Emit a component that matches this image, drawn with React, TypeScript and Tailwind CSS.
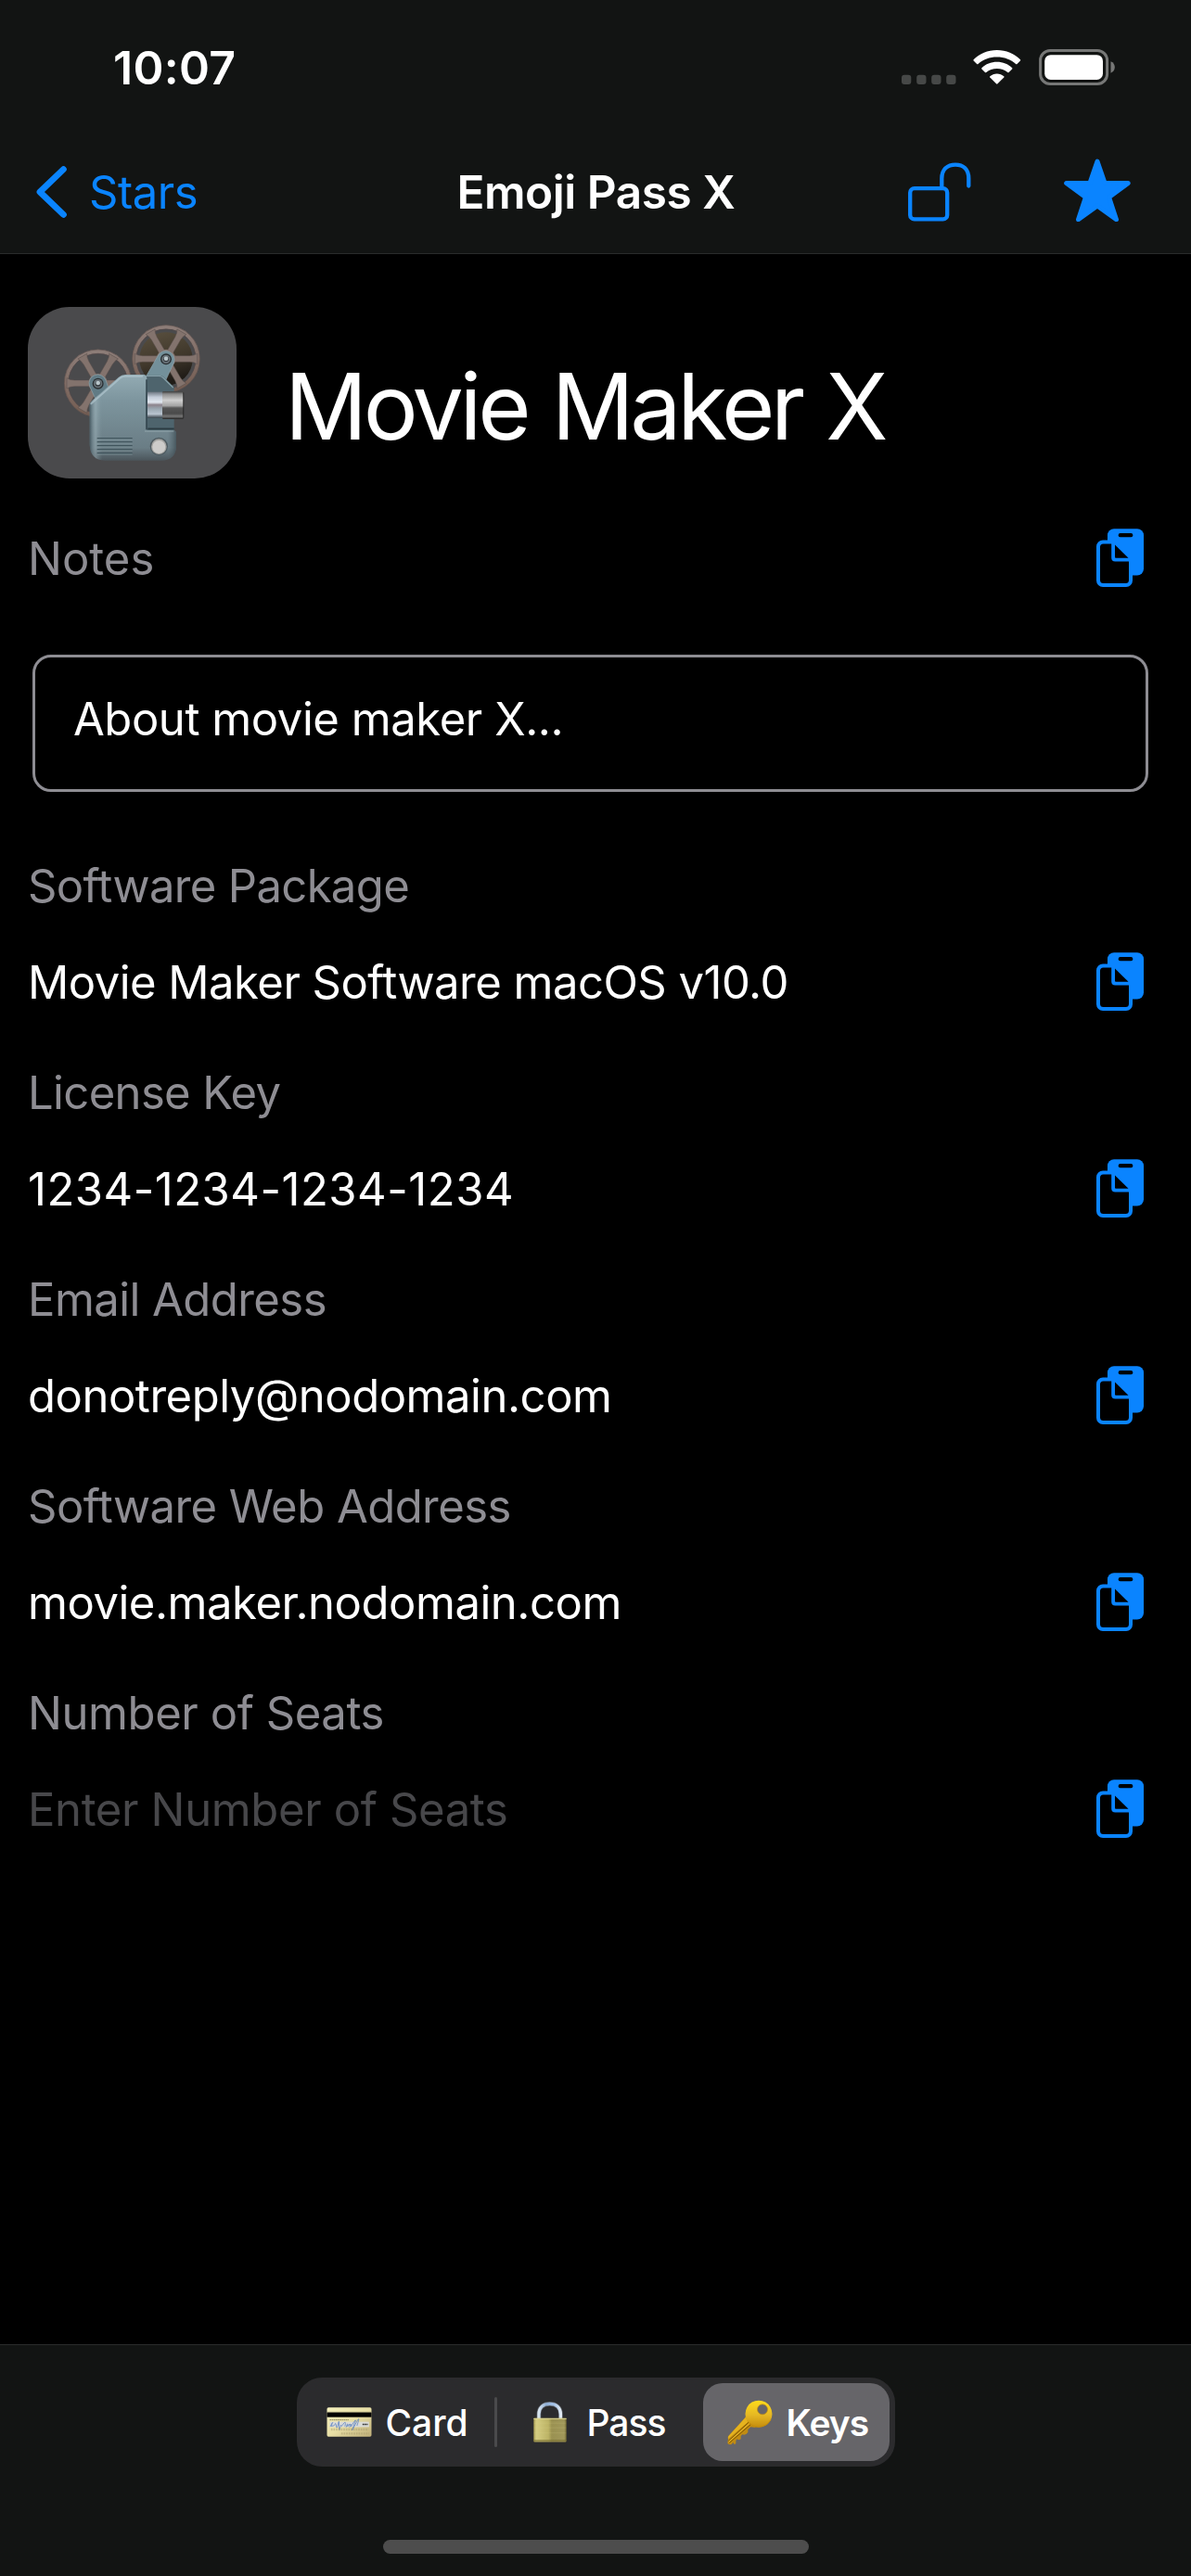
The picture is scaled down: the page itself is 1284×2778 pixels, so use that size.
import React from "react";

const fields = [
  { label: "Software Package", labelCls: "tracking-[-0.65px]", value: "Movie Maker Software macOS v10.0", valueCls: "text-white tracking-[-0.52px]" },
  { label: "License Key", labelCls: "tracking-[-0.64px]", value: "1234-1234-1234-1234", valueCls: "text-white tracking-[0.5px]" },
  { label: "Email Address", labelCls: "tracking-[-0.55px]", value: "donotreply@nodomain.com", valueCls: "text-white tracking-[-0.47px]" },
  { label: "Software Web Address", labelCls: "tracking-[-0.53px]", value: "movie.maker.nodomain.com", valueCls: "text-white tracking-[-0.47px]" },
  { label: "Number of Seats", labelCls: "tracking-[-0.42px]", value: "Enter Number of Seats", valueCls: "text-[#47474a] tracking-[-0.36px]" },
];

function CopyIcon() {
  return (
    <button aria-label="Copy" className="shrink-0">
      <svg className="block h-[63px] w-[51px]" viewBox="0 0 51 63">
        <rect x="12" y="0.3" width="39" height="50.2" rx="7" fill="#0a84ff" />
        <rect x="23.7" y="5" width="15.6" height="4.2" rx="2" fill="#000" />
        <path d="M7 12.5H17.5L39 34V56a7 7 0 0 1-7 7H7a7 7 0 0 1-7-7V19.500a7 7 0 0 1 7-7Z" fill="#0a84ff" />
        <path d="M7.500 16.500H16.200V31.500a4 4 0 0 0 4 4H35V55.500a3.500 3.500 0 0 1-3.500 3.500H7.500A3.500 3.500 0 0 1 4 55.500V20a3.500 3.500 0 0 1 3.500-3.500Z" fill="#000" />
        <path d="M20 17.500 34.500 31.800H21a1 1 0 0 1-1-1Z" fill="#000" />
      </svg>
    </button>
  );
}

function StatusBar() {
  return (
    <div className="flex h-[146px] items-center justify-between pl-[122px] pr-[82px]">
      <span className="text-[50px] font-semibold leading-none tracking-[0.3px] text-white">10:07</span>
      <div className="mb-px flex items-center">
        <svg className="h-[39px] w-[59px]" viewBox="0 0 59 39" fill="#464847">
          <rect x="0" y="27.700" width="10.300" height="10.300" rx="3" />
          <rect x="16.200" y="27.700" width="10.300" height="10.300" rx="3" />
          <rect x="32.200" y="27.700" width="10.300" height="10.300" rx="3" />
          <rect x="48.200" y="27.700" width="10.300" height="10.300" rx="3" />
        </svg>
        <svg className="ml-[18px] h-[39px] w-[52px]" viewBox="0 0 52 39" fill="#fff">
          <path d="M25.800 1C35.700 1 44.700 4.900 51 11.200Q51.500 11.900 51 12.500L47.500 16Q46.800 16.600 46.100 16C40.800 10.900 33.700 8.400 25.800 8.400S10.800 10.900 5.500 16Q4.800 16.600 4.100 16L.600 12.500Q.100 11.900 .600 11.200C6.900 4.900 15.900 1 25.800 1Z" />
          <path d="M25.800 13.800C32.200 13.800 37.900 16.200 42.200 20.200Q42.700 20.800 42.200 21.400L38.600 25Q38 25.500 37.300 25C34.200 22.400 30.200 21 25.800 21S17.400 22.400 14.300 25Q13.600 25.500 13 25L9.400 21.400Q8.900 20.800 9.400 20.200C13.700 16.200 19.400 13.800 25.800 13.800Z" />
          <path d="M25.800 26.400C28.700 26.400 31.300 27.500 33.300 29.200Q33.800 29.800 33.300 30.400L26.500 37.300Q25.800 38 25.100 37.300L18.300 30.400Q17.800 29.800 18.300 29.200C20.300 27.500 22.900 26.400 25.800 26.400Z" />
        </svg>
        <svg className="ml-[19px] h-[39px] w-[82px]" viewBox="0 0 82 39">
          <rect x="1.600" y="1.600" width="72" height="35.800" rx="10.500" fill="none" stroke="#767776" strokeWidth="3" />
          <rect x="6.200" y="6.200" width="62.800" height="26.800" rx="6.500" fill="#fff" />
          <path d="M77.500 13.300Q81.800 15.200 81.800 19.500T77.500 25.700Z" fill="#767776" />
        </svg>
      </div>
    </div>
  );
}

function NavBar() {
  return (
    <div className="grid h-[122px] grid-cols-[1fr_auto_1fr] items-center pl-[38px] pr-[65px]">
      <button className="flex items-center text-[#0a84ff]">
        <svg className="h-[58px] w-[36px]" viewBox="0 0 36 58" fill="none" stroke="currentColor" strokeWidth="6.800" strokeLinecap="round" strokeLinejoin="round">
          <path d="M30.400 4.600 5 29 30.400 53.400" />
        </svg>
        <span className="ml-[22px] text-[49px] leading-none tracking-[-0.5px]">Stars</span>
      </button>
      <h1 className="ml-[28px] mt-[2px] text-[49.5px] font-semibold leading-none tracking-[-0.45px] text-white">Emoji Pass X</h1>
      <div className="mb-1 flex items-center justify-end gap-[100px]">
        <svg className="h-[68px] w-[68px]" viewBox="0 0 68 68" fill="none" stroke="#0a84ff" strokeWidth="4.300" strokeLinecap="round">
          <rect x="2.200" y="32.200" width="40" height="33.200" rx="4.500" />
          <path d="M36.300 31.500V21.500C36.300 11.500 42.500 6.600 51 6.600S65.300 11.500 65.300 21.500V29.500" />
        </svg>
        <svg className="h-[68px] w-[72px]" viewBox="0 0 72 68" fill="#0a84ff" stroke="#0a84ff" strokeWidth="5" strokeLinejoin="round">
          <path d="M36 3 44 26.300 69.300 26.500 48.600 41.800 56.500 65.700 36 51 15.500 65.700 23.400 41.800 2.700 26.500 28 26.300Z" />
        </svg>
      </div>
    </div>
  );
}

function Reel({ cx, cy }: { cx: number; cy: number }) {
  return (
    <g transform={`translate(${cx} ${cy})`}>
      <circle r="103" fill="none" stroke="url(#reel)" strokeWidth="13" />
      <circle r="109" fill="none" stroke="#5d504d" strokeWidth="2" />
      <circle r="96" fill="none" stroke="#54494a" strokeWidth="2" />
      {[0, 60, 120].map((a) => (
        <g key={a} transform={`rotate(${a})`}>
          <path d="M-101 -17Q-91 -10 -76 -10H76Q91 -10 101 -17V17Q91 10 76 10H-76Q-91 10 -101 17Z" fill="#83736d" stroke="#5b4f4c" strokeWidth="1.500" />
        </g>
      ))}
      <circle r="31" fill="#83736d" />
    </g>
  );
}

function Hub({ cx, cy }: { cx: number; cy: number }) {
  return (
    <g>
      <circle cx={cx} cy={cy} r="18" fill="#292e31" />
      <circle cx={cx} cy={cy} r="14" fill="#687278" />
      <circle cx={cx} cy={cy} r="9" fill="#343a3e" />
      <circle cx={cx} cy={cy - 2} r="7" fill="#b8c5ca" />
    </g>
  );
}

function ProjectorTile() {
  return (
    <div className="h-[185px] w-[225px] shrink-0 overflow-hidden rounded-[45px] bg-[#4a4a4c]">
      <svg className="block h-full w-full" viewBox="30 33 675 555">
        <defs>
          <linearGradient id="reel" x1="0" y1="0" x2="0" y2="1">
            <stop offset="0" stopColor="#8d7d78" />
            <stop offset="1" stopColor="#745d52" />
          </linearGradient>
          <linearGradient id="body" x1="0" y1="0" x2="0" y2="1">
            <stop offset="0" stopColor="#93abb3" />
            <stop offset="0.300" stopColor="#7d959e" />
            <stop offset="0.850" stopColor="#6a7d85" />
            <stop offset="1" stopColor="#4b555b" />
          </linearGradient>
          <linearGradient id="edge" x1="0" y1="0" x2="1" y2="0">
            <stop offset="0" stopColor="#33464f" stopOpacity="0.700" />
            <stop offset="0.070" stopColor="#b4c8cf" stopOpacity="0.350" />
            <stop offset="0.150" stopColor="#8099a2" stopOpacity="0" />
            <stop offset="0.900" stopColor="#50626a" stopOpacity="0" />
            <stop offset="1" stopColor="#2f3c42" stopOpacity="0.600" />
          </linearGradient>
          <linearGradient id="film" x1="0" y1="0" x2="0.300" y2="1">
            <stop offset="0" stopColor="#5b5140" />
            <stop offset="0.600" stopColor="#40382b" />
            <stop offset="1" stopColor="#201c17" />
          </linearGradient>
          <linearGradient id="lensA" x1="0" y1="0" x2="0" y2="1">
            <stop offset="0" stopColor="#6e7882" />
            <stop offset="0.200" stopColor="#c3ccd8" />
            <stop offset="0.400" stopColor="#e1e7ef" />
            <stop offset="0.500" stopColor="#8c848d" />
            <stop offset="0.650" stopColor="#9aa7b1" />
            <stop offset="0.850" stopColor="#b9c4cf" />
            <stop offset="1" stopColor="#3b444b" />
          </linearGradient>
          <linearGradient id="lensB" x1="0" y1="0" x2="0" y2="1">
            <stop offset="0" stopColor="#3c3c3c" />
            <stop offset="0.100" stopColor="#8c8c8c" />
            <stop offset="0.320" stopColor="#cfcfcf" />
            <stop offset="0.520" stopColor="#a3a3a3" />
            <stop offset="0.600" stopColor="#555" />
            <stop offset="0.800" stopColor="#4a4a4a" />
            <stop offset="0.900" stopColor="#777" />
            <stop offset="1" stopColor="#222" />
          </linearGradient>
        </defs>
        <Reel cx={257} cy={280} />
        <circle cx="477" cy="201" r="86" fill="url(#film)" />
        <Reel cx={477} cy={201} />
        <path d="M230 289A27 27 0 0 1 282 270L300 320 262 360Z" fill="#617b85" stroke="#8ba3ab" strokeWidth="2" />
        <path d="M410 262 451 191A28 28 0 0 1 502 214L476 270Z" fill="#73909a" stroke="#8fa8b0" strokeWidth="2" />
        <Hub cx={257} cy={281} />
        <Hub cx={477} cy={202} />
        <path d="M405 254H455Q464 254 471 261L503 293V436H405Z" fill="#4e646d" />
        <path d="M413 256H455Q462 256 469 263L500 294" fill="none" stroke="#859fa8" strokeWidth="4" />
        <path d="M345 252H403Q415 252 415 265V432H500Q510 432 510 443V480Q510 530 462 530H280Q232 530 230 478V352Q230 343 237 337L324 260Q333 252 345 252Z" fill="url(#body)" />
        <path d="M345 252H403Q415 252 415 265V432H500Q510 432 510 443V480Q510 530 462 530H280Q232 530 230 478V352Q230 343 237 337L324 260Q333 252 345 252Z" fill="url(#edge)" />
        <path d="M235 346 330 262Q337 257 347 257H400" fill="none" stroke="#b0c6ce" strokeWidth="6" strokeLinecap="round" opacity="0.700" />
        <path d="M414 268V430" stroke="#263740" strokeWidth="4" />
        <path d="M418 427H503" stroke="#2b3b42" strokeWidth="5" />
        <path d="M408 435H502" stroke="#91a5ac" strokeWidth="3" />
        <rect x="417" y="308" width="50" height="84" fill="url(#lensA)" />
        <rect x="465" y="306" width="69" height="90" rx="4" fill="url(#lensB)" />
        <rect x="531" y="309" width="4" height="84" rx="2" fill="#242424" opacity="0.700" />
        {[458, 470, 482, 494, 506].map((y) => (
          <g key={y}>
            <path d={`M254 ${y}H368`} stroke="#3f535b" strokeWidth="4" />
            <path d={`M254 ${y + 4}H368`} stroke="#84979e" strokeWidth="2" />
          </g>
        ))}
        <circle cx="454" cy="484" r="29" fill="#4d5a60" />
        <circle cx="454" cy="485" r="25" fill="#a5a5a2" />
        <circle cx="454" cy="486" r="21" fill="#cdccca" />
      </svg>
    </div>
  );
}

function CardEmoji() {
  return (
    <svg className="h-[32px] w-[49px]" viewBox="157 260 146 96">
      <defs>
        <linearGradient id="card" x1="0" y1="0" x2="1" y2="1">
          <stop offset="0" stopColor="#f5f0bd" />
          <stop offset="0.500" stopColor="#e8dfa6" />
          <stop offset="1" stopColor="#bfae78" />
        </linearGradient>
      </defs>
      <rect x="158" y="261" width="144" height="94" rx="5" fill="url(#card)" />
      <path d="M158 276H302" stroke="#8d8868" strokeWidth="2" />
      <rect x="158" y="277" width="144" height="15" fill="#000" />
      <path d="M167 301H228" stroke="#77714e" strokeWidth="3" strokeDasharray="5 1.500" opacity="0.800" />
      <rect x="167" y="307" width="127" height="17" fill="#dadbd8" />
      <path d="M169 322Q179 309 176 309T171 321Q182 322 184 315T188 321 194 314 197 321 203 317M205 322Q215 307 217 309T216 322M220 325 224 314Q230 315 223 321 230 322 231 314M231 325 234 314Q239 318 236 322T245 308 244 321 250 315 255 320" fill="none" stroke="#5d83c0" strokeWidth="2.300" />
      <path d="M273 315.500H290" stroke="#33332f" strokeWidth="5" strokeDasharray="4 1" />
      <path d="M171 332H292M204 345H294" stroke="#a79b6d" strokeWidth="7" strokeDasharray="5 3" opacity="0.500" />
    </svg>
  );
}

function LockEmoji() {
  return (
    <svg className="h-[44px] w-[36px]" viewBox="827 243 109 133">
      <defs>
        <linearGradient id="brass" x1="0" y1="0" x2="1" y2="0">
          <stop offset="0" stopColor="#a69b52" />
          <stop offset="0.080" stopColor="#d5cd82" />
          <stop offset="0.450" stopColor="#bcb365" />
          <stop offset="0.550" stopColor="#9a9151" />
          <stop offset="0.930" stopColor="#a0975a" />
          <stop offset="1" stopColor="#756c35" />
        </linearGradient>
        <linearGradient id="steel" x1="0" y1="0" x2="1" y2="0">
          <stop offset="0" stopColor="#d7e4f0" />
          <stop offset="0.350" stopColor="#8faed5" />
          <stop offset="0.700" stopColor="#a5c3e8" />
          <stop offset="1" stopColor="#e0e9f2" />
        </linearGradient>
      </defs>
      <path d="M845 300V284C845 262 860 250 880.500 250S916 262 916 284V300" fill="none" stroke="#62676d" strokeWidth="14" />
      <path d="M845 300V284C845 262 860 250 880.500 250S916 262 916 284V300" fill="none" stroke="url(#steel)" strokeWidth="10" />
      <rect x="828" y="297" width="107" height="77" rx="2" fill="url(#brass)" />
      <path d="M828 298.500H935" stroke="#ded895" strokeWidth="3" />
      <path d="M829 313H934M829 328H934M829 345H934" stroke="#e0d990" strokeWidth="2" opacity="0.250" />
      <path d="M828 370H935" stroke="#6d632a" strokeWidth="3" />
      <path d="M830 373H933" stroke="#a2964d" strokeWidth="2" />
    </svg>
  );
}

function KeyEmoji() {
  return (
    <svg className="h-[49px] w-[49px]" viewBox="433 234 147 147">
      <defs>
        <linearGradient id="gold" x1="0" y1="0" x2="0" y2="1">
          <stop offset="0" stopColor="#ffdc1c" />
          <stop offset="0.550" stopColor="#e5b723" />
          <stop offset="1" stopColor="#c48c0e" />
        </linearGradient>
      </defs>
      <path d="M491 292 437 351Q433 356 436 361L434 375Q440 380 447 378L452 372 456 378 461 376V366L465 361 470 364 477 361V351L482 346Q493 350 500 339V330L509 322 525 324 497 280Z" fill="#c18c12" />
      <path d="M493 290 437 352 436 361 500 306Z" fill="#e5b31e" />
      <path d="M437 367 505 304M440 373 511 312" stroke="#835900" strokeWidth="3" />
      <path d="M438 370 507 309" stroke="#edbe2d" strokeWidth="3" />
      <path fillRule="evenodd" d="M535 236A43.500 43.500 0 1 1 534.900 236ZM547 249A16 16 0 1 0 547.100 249Z" fill="url(#gold)" />
      <path d="M502 305Q515 323 538 321 562 319 574 298" fill="none" stroke="#c58d0a" strokeWidth="3" />
      <circle cx="547" cy="265" r="16.500" fill="none" stroke="#ae8119" strokeWidth="2" />
    </svg>
  );
}

function Footer() {
  return (
    <div className="flex h-[250px] flex-col items-center border-t border-[#2a2b2b] bg-[#121413]">
      <div className="mt-[35px] flex h-24 w-[645px] items-center rounded-[27px] bg-[#2b2b2d] pr-[6px] text-[39px] leading-none text-white">
        <button className="flex w-[213px] items-center pl-[32px] font-medium">
          <CardEmoji />
          <span className="ml-[15px]">Card</span>
        </button>
        <div className="h-[54px] w-[3px] rounded-full bg-[#4a4a4c]" />
        <button className="flex w-[222px] items-center pl-[39px] font-medium">
          <LockEmoji />
          <span className="ml-[22px] tracking-[-1px]">Pass</span>
        </button>
        <button className="flex h-[84px] w-[201px] items-center rounded-[21px] bg-[#666569] pl-[26px] font-semibold">
          <KeyEmoji />
          <span className="ml-[15px] tracking-[-1px]">Keys</span>
        </button>
      </div>
      <div className="mt-[79px] h-[15px] w-[459px] rounded-full bg-[#4d4d4d]" />
    </div>
  );
}

export default function App() {
  return (
    <div className="flex h-[2778px] w-[1284px] flex-col overflow-hidden bg-black font-['Inter',sans-serif] text-[49px]">
      <header className="h-[274px] shrink-0 border-b border-[#2a2b2b] bg-[#121413]">
        <StatusBar />
        <NavBar />
      </header>
      <main className="flex-1 pl-[30px] pt-[57px]">
        <div className="flex items-center">
          <ProjectorTile />
          <h2 className="ml-[52px] mt-[31px] whitespace-nowrap text-[98.5px] leading-none tracking-[-4.3px] [word-spacing:3px] text-white">Movie Maker X</h2>
        </div>
        <div className="mt-[54px] flex h-[63px] items-center justify-between pr-[51px]">
          <span className="pt-[2px] leading-none text-[#8e8d93]">Notes</span>
          <CopyIcon />
        </div>
        <div className="ml-[5px] mr-[46px] mt-[73px] flex h-[148px] items-center rounded-[20px] border-[3px] border-[#8e8d93] pb-[10px] pl-[41px]">
          <span className="leading-none tracking-[-0.44px] text-white">About movie maker X...</span>
        </div>
        <div className="mt-[71px] flex flex-col gap-[58px]">
          {fields.map((f) => (
            <div key={f.label}>
              <div className="flex h-[60px] items-center leading-none text-[#8e8d93]">
                <span className={f.labelCls}>{f.label}</span>
              </div>
              <div className="mt-[42px] flex h-[63px] items-center justify-between pr-[51px] leading-none">
                <span className={`pt-[2px] ${f.valueCls}`}>{f.value}</span>
                <CopyIcon />
              </div>
            </div>
          ))}
        </div>
      </main>
      <Footer />
    </div>
  );
}
